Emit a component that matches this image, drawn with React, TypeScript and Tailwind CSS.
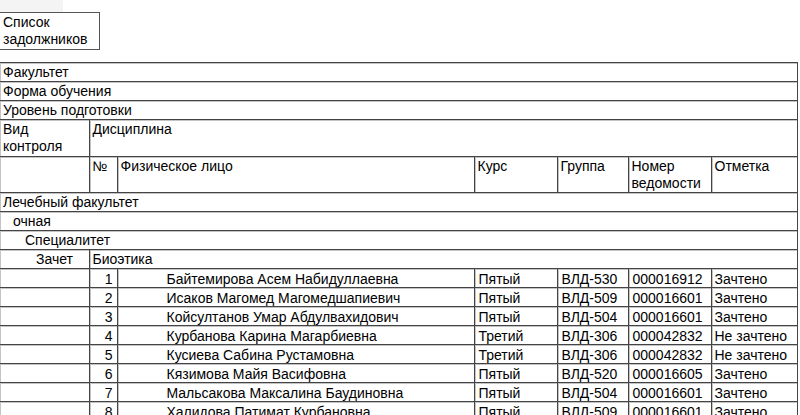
import React from "react";

const rows = [
  ["1", "Байтемирова Асем Набидуллаевна", "Пятый", "ВЛД-530", "000016912", "Зачтено"],
  ["2", "Исаков Магомед Магомедшапиевич", "Пятый", "ВЛД-509", "000016601", "Зачтено"],
  ["3", "Койсултанов Умар Абдулвахидович", "Пятый", "ВЛД-504", "000016601", "Зачтено"],
  ["4", "Курбанова Карина Магарбиевна", "Третий", "ВЛД-306", "000042832", "Не зачтено"],
  ["5", "Кусиева Сабина Рустамовна", "Третий", "ВЛД-306", "000042832", "Не зачтено"],
  ["6", "Кязимова Майя Васифовна", "Пятый", "ВЛД-520", "000016605", "Зачтено"],
  ["7", "Мальсакова Максалина Баудиновна", "Пятый", "ВЛД-504", "000016601", "Зачтено"],
  ["8", "Халидова Патимат Курбановна", "Пятый", "ВЛД-509", "000016601", "Зачтено"],
];

const cell =
  "border-b border-r border-[#444] shadow-[inset_1px_1px_0_#c4c4c4] align-top p-0 whitespace-nowrap overflow-hidden";
const one = " pt-[1px] leading-[17px]";
const data = " pt-[2px] leading-[16px]";

export default function App() {
  return (
    <div
      className="w-[800px] h-[415px] overflow-hidden bg-white text-black text-[14px]"
      style={{ fontFamily: '"Liberation Sans", Arial, sans-serif' }}
    >
      <div className="w-[63px] h-[12px] bg-[#f4f4f4]" />
      <div className="w-[100px] h-[38px] border border-l-0 border-[#555] pl-[3px] pt-[1px] leading-[17px]">
        Список
        <br />
        задолжников
      </div>
      <table className="mt-[12px] border-collapse table-fixed w-[797px] border-t border-[#444]">
        <colgroup>
          <col className="w-[89px]" />
          <col className="w-[28px]" />
          <col className="w-[357px]" />
          <col className="w-[83px]" />
          <col className="w-[71px]" />
          <col className="w-[83px]" />
          <col className="w-[86px]" />
        </colgroup>
        <tbody>
          <tr className="h-[19px]">
            <td colSpan={7} className={cell + one + " px-[3px]"}>Факультет</td>
          </tr>
          <tr className="h-[19px]">
            <td colSpan={7} className={cell + one + " px-[3px]"}>Форма обучения</td>
          </tr>
          <tr className="h-[19px]">
            <td colSpan={7} className={cell + one + " px-[3px]"}>Уровень подготовки</td>
          </tr>
          <tr className="h-[37px]">
            <td className={cell + one + " px-[3px]"}>
              Вид
              <br />
              контроля
            </td>
            <td colSpan={6} className={cell + one + " px-[3px]"}>Дисциплина</td>
          </tr>
          <tr className="h-[35px]">
            <td className={cell}></td>
            <td className={cell + one + " px-[3px]"}>№</td>
            <td className={cell + one + " px-[3px]"}>Физическое лицо</td>
            <td className={cell + one + " px-[3px]"}>Курс</td>
            <td className={cell + one + " px-[3px]"}>Группа</td>
            <td className={cell + one + " px-[3px]"}>
              Номер
              <br />
              ведомости
            </td>
            <td className={cell + one + " px-[3px]"}>Отметка</td>
          </tr>
          <tr className="h-[19px]">
            <td colSpan={7} className={cell + one + " px-[3px]"}>Лечебный факультет</td>
          </tr>
          <tr className="h-[19px]">
            <td colSpan={7} className={cell + one + " pl-[13px]"}>очная</td>
          </tr>
          <tr className="h-[19px]">
            <td colSpan={7} className={cell + one + " pl-[25px]"}>Специалитет</td>
          </tr>
          <tr className="h-[19px]">
            <td className={cell + one + " pl-[36px]"}>Зачет</td>
            <td colSpan={6} className={cell + one + " px-[3px]"}>Биоэтика</td>
          </tr>
          {rows.map((r) => (
            <tr key={r[0]} className="h-[19px]">
              <td className={cell + data}></td>
              <td className={cell + data + " text-right pr-[4px]"}>{r[0]}</td>
              <td className={cell + data + " pl-[49px]"}>{r[1]}</td>
              <td className={cell + data + " px-[4px]"}>{r[2]}</td>
              <td className={cell + data + " px-[4px]"}>{r[3]}</td>
              <td className={cell + data + " px-[4px]"}>{r[4]}</td>
              <td className={cell + data + " px-[3px]"}>{r[5]}</td>
            </tr>
          ))}
        </tbody>
      </table>
    </div>
  );
}
